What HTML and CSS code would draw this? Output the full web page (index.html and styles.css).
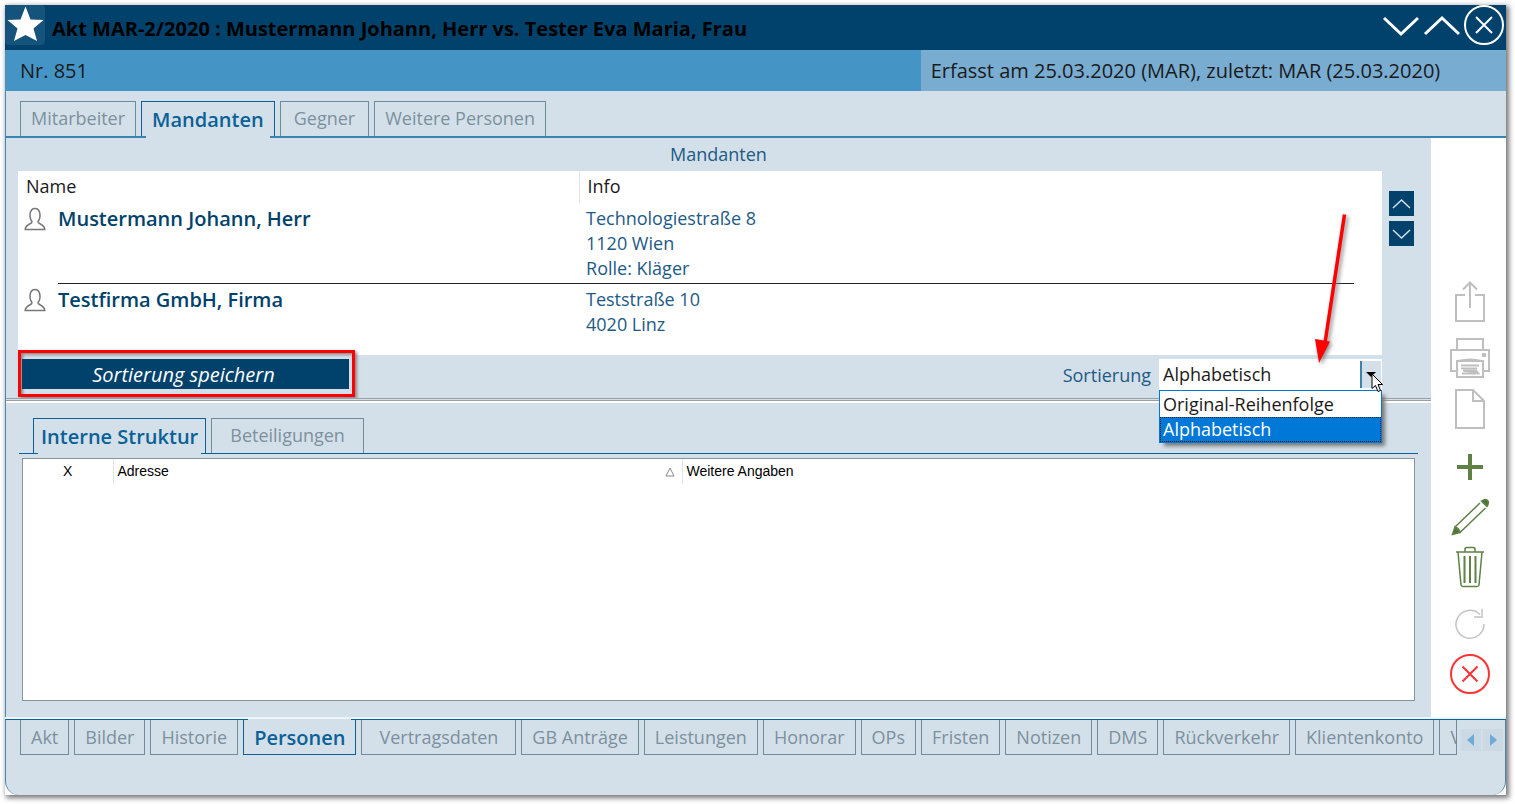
FILE: index.html
```html
<!DOCTYPE html>
<html lang="de">
<head>
<meta charset="utf-8">
<title>Akt MAR-2/2020</title>
<link rel="stylesheet" href="styles.css">
</head>
<body>
<div class="window">
  <header class="titlebar">
    <button class="favorite" aria-label="Favorit">
      <svg width="40" height="40" viewBox="0 0 40 40"><path d="M20.500 1.500 25.500 14.500 38.500 15 28.500 23.500 32 36 20.500 30 9 36 12.500 23.500 2.500 15 15.500 14.500Z" fill="#fff"/></svg>
    </button>
    <h1 class="title">Akt MAR-2/2020 : Mustermann Johann, Herr vs. Tester Eva Maria, Frau</h1>
    <div class="window-controls">
      <button aria-label="Nächster"><svg width="38" height="24" viewBox="0 0 38 24"><path d="M2 4 19 20 36 4" fill="none" stroke="#fff" stroke-width="3"/></svg></button>
      <button aria-label="Vorheriger"><svg width="38" height="24" viewBox="0 0 38 24"><path d="M2 20 19 4 36 20" fill="none" stroke="#fff" stroke-width="3"/></svg></button>
      <button aria-label="Schließen"><svg width="42" height="42" viewBox="0 0 42 42"><circle cx="20" cy="20" r="19" fill="none" stroke="#fff" stroke-width="2"/><path d="M12 12 28 28M28 12 12 28" stroke="#fff" stroke-width="2"/></svg></button>
    </div>
  </header>

  <div class="infobar">
    <span class="number">Nr. 851</span>
    <span class="captured">Erfasst am 25.03.2020 (MAR), zuletzt: MAR (25.03.2020)</span>
  </div>

  <nav class="tabs tabs-top">
    <button class="tab">Mitarbeiter</button>
    <button class="tab active">Mandanten</button>
    <button class="tab tab-gegner">Gegner</button>
    <button class="tab">Weitere Personen</button>
  </nav>

  <div class="body">
    <main class="content">
      <section class="clients">
        <h2 class="caption">Mandanten</h2>
        <div class="clients-row">
          <div class="list">
            <table class="client-table">
              <colgroup><col class="col-icon"><col class="col-name"><col><col class="col-end"></colgroup>
              <thead><tr><th colspan="2">Name</th><th class="info-head" colspan="2">Info</th></tr></thead>
              <tbody>
                <tr class="ruled">
                  <td class="icon-cell"><svg width="22" height="24" viewBox="0 0 22 24"><path d="M8 14.500C5 11 5 1.500 11 1.500S17 11 14 14.500C13.500 17.500 20.500 16.500 20.800 22.500H1.200C1.500 16.500 8.500 17.500 8 14.500Z" fill="none" stroke="#777" stroke-width="1.500"/></svg></td>
                  <td class="name">Mustermann Johann, Herr</td>
                  <td class="info">Technologiestraße 8<br>1120 Wien<br>Rolle: Kläger</td>
                  <td></td>
                </tr>
                <tr>
                  <td class="icon-cell"><svg width="22" height="24" viewBox="0 0 22 24"><path d="M8 14.500C5 11 5 1.500 11 1.500S17 11 14 14.500C13.500 17.500 20.500 16.500 20.800 22.500H1.200C1.500 16.500 8.500 17.500 8 14.500Z" fill="none" stroke="#777" stroke-width="1.500"/></svg></td>
                  <td class="name">Testfirma GmbH, Firma</td>
                  <td class="info">Teststraße 10<br>4020 Linz</td>
                  <td></td>
                </tr>
              </tbody>
            </table>
          </div>
          <div class="reorder">
            <button aria-label="Nach oben"><svg width="25" height="25" viewBox="0 0 25 25"><path d="M4 17 12.500 9 21 17" fill="none" stroke="#d4e0e9" stroke-width="1.500"/></svg></button>
            <button aria-label="Nach unten"><svg width="25" height="25" viewBox="0 0 25 25"><path d="M4 9 12.500 17 21 9" fill="none" stroke="#d4e0e9" stroke-width="1.500"/></svg></button>
          </div>
        </div>
        <div class="sortbar">
          <div class="highlight"><button class="save-sort">Sortierung speichern</button></div>
          <label class="sort-label" for="sort">Sortierung</label>
          <div class="combo">
            <select id="sort"><option>Original-Reihenfolge</option><option selected>Alphabetisch</option></select>
            <span class="combo-arrow"></span>
            <ul class="options">
              <li>Original-Reihenfolge</li>
              <li class="selected">Alphabetisch</li>
            </ul>
            <svg class="pointer-arrow" width="50" height="160" viewBox="0 0 50 160"><path d="M34.500 4.500 15 133" stroke="#f00" stroke-width="3.500"/><path d="M5 129 20 131.500 9 153Z" fill="#f00"/></svg>
            <svg class="cursor" width="14" height="20" viewBox="0 0 14 20"><path d="M1 1V15.500L4.500 12.500 7 18.500 9.500 17.500 7 11.500H11.500Z" fill="#fff" stroke="#000"/></svg>
          </div>
        </div>
      </section>

      <div class="splitter"></div>

      <section class="structure">
        <nav class="tabs tabs-inner">
          <button class="tab active">Interne Struktur</button>
          <button class="tab tab-wide">Beteiligungen</button>
        </nav>
        <div class="grid">
          <table class="grid-table">
            <colgroup><col class="col-x"><col class="col-address"><col></colgroup>
            <thead><tr>
              <th class="x-head">X</th>
              <th><span class="head-row">Adresse <svg width="10" height="10" viewBox="0 0 10 10"><path d="M5 1 9 9H1Z" fill="none" stroke="#888"/></svg></span></th>
              <th>Weitere Angaben</th>
            </tr></thead>
          </table>
        </div>
      </section>
    </main>

    <aside class="toolbar">
      <button aria-label="Exportieren"><svg width="40" height="44" viewBox="0 0 40 44" fill="none" stroke="#bfbfbf" stroke-width="2"><path d="M15 16H6V42H34V16H25M20 29V4M13 10.500 20 3.500 27 10.500"/></svg></button>
      <button class="print" aria-label="Drucken"><svg width="42" height="42" viewBox="0 0 42 42" fill="none" stroke="#bfbfbf" stroke-width="2"><path d="M8 13V2H34V13M8 34H2V13H40V34H34"/><rect x="8" y="24" width="26" height="16"/><path d="M9 24Q21 21 33 24M12 28.500H30M12 31.500H28M13 36.500H29" /><path d="M14 33.500H27L29 36Z" fill="#bfbfbf"/><rect x="34" y="17" width="2" height="2" fill="#bfbfbf"/></svg></button>
      <button class="doc" aria-label="Neues Dokument"><svg width="32" height="42" viewBox="0 0 32 42" fill="none" stroke="#bfbfbf" stroke-width="2"><path d="M2 2H19L30 13V40H2ZM19 2V13H30"/></svg></button>
      <button class="add" aria-label="Hinzufügen"><svg width="28" height="28" viewBox="0 0 28 28"><path d="M14 1V27M1 14H27" stroke="#5f8146" stroke-width="4"/></svg></button>
      <button class="edit" aria-label="Bearbeiten"><svg width="40" height="40" viewBox="0 0 40 40" fill="none" stroke="#5f8146" stroke-width="1.500"><path d="M5 30 30 6M10 35.500 35.500 11"/><path d="M5 30 2.500 37.500 10 35.500Z" fill="#4f7337"/><path d="M31.500 4Q36 1 38 4Q39 6 37 9.500Z" fill="#4f7337"/><path d="M5 30Q9 31 10 35.500"/></svg></button>
      <button class="trash" aria-label="Löschen"><svg width="30" height="42" viewBox="0 0 30 42" fill="none" stroke="#5f8146" stroke-width="1.500"><path d="M1 6H29M10 5.500V3Q10 1.500 12 1.500H18Q20 1.500 20 3V5.500M3 6 6 39Q6.200 40.500 8 40.500H22Q23.800 40.500 24 39L27 6"/><path d="M9.500 10V37M15 10V37M20.500 10V37" stroke-width="2"/></svg></button>
      <button class="refresh" aria-label="Aktualisieren"><svg width="32" height="32" viewBox="0 0 32 32" fill="none" stroke="#c4c4c4" stroke-width="1.500"><path d="M30 16A14 14 0 1 1 26 6.500M28 1V9H20"/></svg></button>
      <button aria-label="Abbrechen"><svg width="42" height="42" viewBox="0 0 42 42" fill="none" stroke="#f33" stroke-width="2"><circle cx="21" cy="21" r="19"/><path d="M13.500 13.500 28.500 28.500M28.500 13.500 13.500 28.500"/></svg></button>
    </aside>
  </div>

  <nav class="tabs tabs-bottom">
    <button class="tab">Akt</button>
    <button class="tab">Bilder</button>
    <button class="tab">Historie</button>
    <button class="tab active">Personen</button>
    <button class="tab tab-wide">Vertragsdaten</button>
    <button class="tab">GB Anträge</button>
    <button class="tab">Leistungen</button>
    <button class="tab">Honorar</button>
    <button class="tab">OPs</button>
    <button class="tab">Fristen</button>
    <button class="tab">Notizen</button>
    <button class="tab">DMS</button>
    <button class="tab">Rückverkehr</button>
    <button class="tab">Klientenkonto</button>
    <button class="tab tab-cut">V</button>
    <button class="scroll" aria-label="Zurück"><svg width="20" height="22" viewBox="0 0 20 22"><path d="M13 5V17L6 11Z" fill="#6fabd6"/></svg></button>
    <button class="scroll" aria-label="Weiter"><svg width="20" height="22" viewBox="0 0 20 22"><path d="M7 5V17L14 11Z" fill="#6fabd6"/></svg></button>
  </nav>
</div>
</body>
</html>
```
FILE: styles.css
```css
* { box-sizing: border-box; }
body {
  margin: 0;
  padding: 5px 9px 9px 5px;
  background: #fff;
  font-family: "Open Sans", "Noto Sans", sans-serif;
  font-size: 18px;
  line-height: 25px;
  color: #1a1a1a;
}
button { margin: 0; padding: 0; border: 0; background: none; font: inherit; color: inherit; }
svg { display: block; }
table { border-collapse: collapse; table-layout: fixed; width: 100%; }
th { text-align: left; font-weight: 400; }
th, td { padding: 0; vertical-align: top; }

.window {
  display: flex;
  flex-direction: column;
  min-height: calc(100vh - 14px);
  background: #fff;
  box-shadow: 2px 2px 5px 1px #777;
}

.titlebar { display: flex; height: 45px; background: #00426b; }
.favorite { width: 40px; height: 40px; background: #14537c; border-radius: 0 4px 4px 4px; }
.title { flex: 1; margin: 0; padding: 11px 0 0 7px; font-size: 20px; line-height: 25px; font-weight: 700; color: #000; }
.window-controls { display: flex; align-items: center; gap: 3px; padding-bottom: 4px; }

.infobar { display: flex; height: 41px; font-size: 20px; line-height: 42px; background: #4495c6; }
.number { flex: 1; padding-left: 15px; }
.captured { flex: 0 0 39%; padding-left: 10px; background: #79acd1; white-space: nowrap; }

.tabs { display: flex; gap: 5px; background: #d4e0e9; border: 0 solid #4a86b0; border-left-width: 1px; }
.tab {
  position: relative;
  height: 35px;
  padding: 0 10px 2px;
  border: 1px solid #708c9c;
  color: #7c909e;
  white-space: nowrap;
}
.tab.active { padding-bottom: 0; border-color: #0a6197; color: #0a6197; font-size: 20px; font-weight: 600; }
.tab.active::after { content: ""; position: absolute; left: 4px; right: 4px; height: 2px; background: #d4e0e9; }
.tab-wide { padding: 0 17px 2px; }
.tab-gegner { padding: 0 13px 2px; }

.tabs-top { padding: 10px 0 0 14px; border-bottom: 2px solid #3c83af; }
.tabs-top .tab, .tabs-inner .tab { border-bottom: 0; }
.tabs-top .active::after, .tabs-inner .active::after { bottom: -2px; }

.body { flex: 1; display: flex; border-left: 1px solid #4a86b0; background: #d4e0e9; }
.content { flex: 1; display: flex; flex-direction: column; min-width: 0; }
.caption { margin: 0; padding: 4px 0; text-align: center; font-size: 18px; font-weight: 400; line-height: 25px; color: #1d5a85; }
.clients-row { display: flex; gap: 7px; padding: 0 17px 0 12px; }
.list { flex: 1; height: 184px; background: #fff; }
.col-icon { width: 40px; }
.col-name { width: 521px; }
.col-end { width: 28px; }
.client-table th { height: 32px; padding: 3px 8px; }
.client-table .info-head { border-left: 1px solid #e4e4e4; }
.client-table td { padding: 3px 0 2px; }
.client-table .icon-cell { padding: 4px 0 0 6px; }
.name { font-size: 20px; font-weight: 600; color: #00426b; }
.client-table .info { padding-left: 7px; color: #1d5a85; }
.ruled .name, .ruled .info { border-bottom: 1px solid #222; }
.reorder { display: flex; flex-direction: column; gap: 5px; padding-top: 20px; }
.reorder button { background: #00426b; }

.sortbar { display: flex; align-items: flex-start; height: 43px; padding: 4px 49px 0 12px; }
.highlight {
  margin-top: -9px;
  padding: 6px 3px 5px 1px;
  border: 3px solid #f00;
  box-shadow: 2px 2px 3px #888, inset 2px 2px 3px #888;
}
.save-sort { display: block; width: 327px; height: 30px; padding-right: 4px; background: #00426b; color: #fff; font-size: 20px; font-style: italic; }
.sort-label { margin-left: auto; padding: 4px 8px 0 0; color: #1d5a85; }
.combo { position: relative; width: 223px; }
.combo select {
  display: block;
  width: 100%;
  height: 31px;
  padding: 0 4px;
  border: 0;
  border-radius: 0;
  background: #fff;
  appearance: none;
  font: inherit;
  color: #1a1a1a;
}
.combo-arrow { position: absolute; top: 2px; right: 1px; width: 21px; height: 27px; background: #d4e0e9; border-left: 2px solid #3c83af; }
.combo-arrow::after { content: ""; position: absolute; left: 4px; top: 11px; border: 5px solid transparent; border-top-color: #000; border-bottom: 0; }
.options {
  position: absolute;
  z-index: 2;
  top: 31px;
  left: 0;
  right: 0;
  margin: 0;
  padding: 1px 0 0;
  list-style: none;
  background: #fff;
  border: 1px solid #0078d7;
  box-shadow: 4px 4px 4px -1px #777;
}
.options li { padding: 0 3px; height: 25px; }
.options .selected { background: #0078d7; color: #fff; outline: 1px dotted #222; outline-offset: -1px; }
.pointer-arrow { position: absolute; right: 22px; bottom: 20px; filter: drop-shadow(2px 2px 2px #888); }
.cursor { position: absolute; z-index: 3; left: 212px; top: 14px; }

.splitter { height: 5px; background: #d4e0e9; border-top: 1px solid #9a9fa4; border-bottom: 2px solid #fff; box-shadow: inset 0 -1px #9a9fa4; }

.structure { flex: 1; display: flex; flex-direction: column; padding: 15px 13px 18px; }
.tabs-inner { padding-left: 14px; border-left-width: 0; border-bottom: 1px solid #0a6197; }
.tabs-inner .tab.active { padding: 0 7px; }
.tabs-inner .tab-wide { padding: 0 18px 2px; }
.grid { flex: 1; min-height: 200px; margin: 4px 3px 0; background: #fff; border: 1px solid #8a949c; }
.col-x { width: 90px; }
.col-address { width: 569px; }
.grid-table { font-family: "Liberation Sans", Arial, sans-serif; font-size: 14px; line-height: 25px; color: #000; }
.grid-table th { padding: 0 4px; border-right: 1px solid #e4e4e4; }
.grid-table th:last-child { border-right: 0; }
.grid-table .x-head { text-align: center; }
.head-row { display: flex; align-items: center; justify-content: space-between; padding-right: 3px; }

.toolbar { display: flex; flex-direction: column; align-items: center; width: 75px; padding: 141px 0 22px 2px; background: #fff; }
.print { margin-top: 14px; }
.doc { margin-top: 9px; }
.add { margin-top: 23px; }
.edit { margin-top: 16px; }
.trash { margin-top: 9px; }
.refresh { margin: 20px 0 13px; }

.tabs-bottom {
  padding: 0 3px 40px 14px;
  border-top: 1px solid #0a6197;
  border-left: 1px solid #4a86b0;
  border-right: 1px solid #4a86b0;
  border-radius: 0 0 14px 14px;
  box-shadow: 0 -2px #eef4f8;
}
.tabs-bottom .tab { padding-top: 1px; padding-bottom: 0; border-top: 0; }
.tabs-bottom .active { padding-top: 0; }
.tabs-bottom .active::after { top: -1px; }
.tabs-bottom .tab-cut { width: 18px; padding-right: 0; overflow: hidden; text-align: left; }
.scroll { margin: 9px -2px 0 -1px; height: 22px; background: #cbd9e4; }
```
